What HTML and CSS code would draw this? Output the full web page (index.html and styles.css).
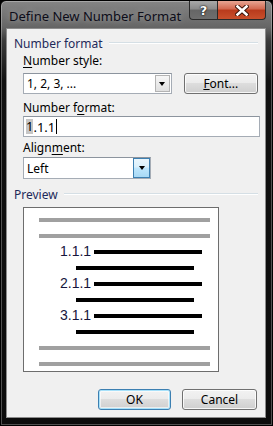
FILE: index.html
```html
<!DOCTYPE html>
<html lang="en">
<head>
    <meta charset="UTF-8">
    <meta name="viewport" content="width=device-width, initial-scale=1.0">
    <title>Define New Number Format</title>
    <link rel="stylesheet" href="styles.css">
</head>
<body>
    <div class="window">
        <div class="titlebar">
            <span class="title">Define New Number Format</span>
            <div class="caption-buttons">
                <div class="cap help">?</div>
                <div class="cap close">
                    <svg width="14" height="11" viewBox="0 0 14 11">
                        <path d="M2.5 1.5 L11.5 9.5 M11.5 1.5 L2.5 9.5" stroke="#3a1208" stroke-width="4.5" stroke-linecap="square"/>
                        <path d="M2.5 1.5 L11.5 9.5 M11.5 1.5 L2.5 9.5" stroke="#fff" stroke-width="2.6" stroke-linecap="square"/>
                    </svg>
                </div>
            </div>
        </div>

        <div class="client">
            <div class="group-head"><span>Number format</span><div class="rule"></div></div>

            <div class="label label-style"><u>N</u>umber style:</div>
            <div class="row">
                <div class="combo combo-style">
                    <span class="combo-text">1, 2, 3, ...</span>
                    <span class="drop"><span class="arrow"></span></span>
                </div>
                <button class="btn btn-font"><u>F</u>ont...</button>
            </div>

            <div class="label label-format">Number f<u>o</u>rmat:</div>
            <div class="textbox"><span class="sel">1</span>.1.1<span class="caret"></span></div>

            <div class="label label-align">Align<u>m</u>ent:</div>
            <div class="combo combo-align">
                <span class="combo-text">Left</span>
                <span class="drop drop-hot"><span class="arrow"></span></span>
            </div>

            <div class="group-head group-preview"><span>Preview</span><div class="rule"></div></div>

            <div class="preview">
                <div class="pv-row pv-gray"><span class="bar"></span></div>
                <div class="pv-row pv-gray"><span class="bar"></span></div>
                <div class="pv-row pv-num"><span class="num">1.1.1</span><span class="bar"></span></div>
                <div class="pv-row pv-indent"><span class="bar"></span></div>
                <div class="pv-row pv-num"><span class="num">2.1.1</span><span class="bar"></span></div>
                <div class="pv-row pv-indent"><span class="bar"></span></div>
                <div class="pv-row pv-num"><span class="num">3.1.1</span><span class="bar"></span></div>
                <div class="pv-row pv-indent"><span class="bar"></span></div>
                <div class="pv-row pv-gray"><span class="bar"></span></div>
                <div class="pv-row pv-gray"><span class="bar"></span></div>
            </div>

            <div class="actions">
                <button class="btn btn-ok">OK</button>
                <button class="btn btn-cancel">Cancel</button>
            </div>
        </div>
    </div>
</body>
</html>
```

FILE: styles.css
```css
html, body {
    margin: 0;
    background: #000;
}
body {
    font-family: "Segoe UI", "Noto Sans", sans-serif;
    font-size: 12px;
    color: #000;
}
.window {
    width: 273px;
    height: 426px;
    box-sizing: border-box;
    border: 1px solid #000;
    border-radius: 6px 6px 0 0;
    background: linear-gradient(to bottom, #858585 0, #666 26px, #3a3a3a 40px, #111 80px, #0c0c0c 100%);
    box-shadow: inset 0 0 0 1px rgba(255, 255, 255, 0.28);
    padding: 0 7px 8px 6px;
    display: flex;
    flex-direction: column;
}
.titlebar {
    height: 28px;
    display: flex;
    justify-content: space-between;
    align-items: flex-start;
}
.title {
    font-size: 13px;
    color: #0c0c18;
    padding: 6px 0 0 2px;
    text-shadow: 0 0 6px rgba(255, 255, 255, 0.4);
}
.caption-buttons {
    display: flex;
    margin-right: -1px;
}
.cap {
    height: 19px;
    box-sizing: border-box;
    border: 1px solid #2a2a2a;
    border-top: none;
    display: flex;
    align-items: center;
    justify-content: center;
}
.help {
    width: 28px;
    border-radius: 0 0 0 4px;
    border-right: none;
    background: linear-gradient(to bottom, #a9a9a9 0, #8a8a8a 45%, #666 50%, #6e6e6e 100%);
    color: #fff;
    font-family: "DejaVu Sans", sans-serif;
    font-weight: bold;
    font-size: 13px;
    text-shadow: 0 0 2px #000, 0 0 1px #000;
}
.close {
    width: 49px;
    border-radius: 0 0 4px 0;
    background: linear-gradient(to bottom, #e7a593 0, #d2674e 45%, #b93a1c 50%, #c9502c 100%);
}
.client {
    flex: 1;
    background: #f0f0f0;
    box-shadow: 0 0 0 1px #8c8c8c;
    padding: 0 7px 0 7px;
    display: flex;
    flex-direction: column;
}
.group-head {
    height: 16px;
    margin-top: 6px;
    display: flex;
    align-items: center;
    color: #1e2a5a;
}
.group-head span {
    margin-right: 6px;
}
.rule {
    flex: 1;
    height: 1px;
    background: #d5dfe5;
    border-bottom: 1px solid #fff;
}
.group-preview {
    margin-top: 7px;
}
.label {
    height: 16px;
    line-height: 16px;
    margin-left: 9px;
}
.label u {
    text-decoration-thickness: 1px;
    text-underline-offset: 2px;
}
.label-style {
    margin-top: 2px;
}
.label-format {
    margin-top: 6px;
}
.label-align {
    margin-top: 3px;
}
.row {
    display: flex;
    align-items: center;
    margin-left: 9px;
    margin-top: 4px;
    gap: 12px;
}
.combo {
    height: 21px;
    box-sizing: border-box;
    border: 1px solid #a5acb5;
    border-top-color: #8c949e;
    background: #fff;
    display: flex;
    align-items: stretch;
}
.combo-style {
    width: 150px;
}
.combo-align {
    width: 128px;
    height: 22px;
    margin-left: 9px;
    margin-top: 1px;
}
.combo-text {
    flex: 1;
    padding-left: 3px;
    display: flex;
    align-items: center;
}
.drop {
    width: 15px;
    box-sizing: border-box;
    border: 1px solid #b3b3b3;
    margin: 1px;
    background: linear-gradient(to bottom, #f6f6f6, #e0e0e0);
    display: flex;
    align-items: center;
    justify-content: center;
}
.drop-hot {
    width: 17px;
    margin: 0;
    border-color: #3c7fb1;
    background: linear-gradient(to bottom, #eaf6fd 0, #d9f0fc 45%, #bee6fd 50%, #a7d9f5 100%);
}
.arrow {
    width: 0;
    height: 0;
    border-left: 3.5px solid transparent;
    border-right: 3.5px solid transparent;
    border-top: 4px solid #000;
}
.btn {
    font-family: inherit;
    font-size: 12px;
    color: #000;
    height: 21px;
    box-sizing: border-box;
    border: 1px solid #707070;
    border-radius: 3px;
    background: linear-gradient(to bottom, #f2f2f2 0, #ebebeb 50%, #dddddd 50%, #cfcfcf 100%);
    box-shadow: inset 0 0 0 1px rgba(255, 255, 255, 0.8);
    padding: 0;
}
.btn-font {
    width: 75px;
}
.textbox {
    height: 21px;
    box-sizing: border-box;
    margin-left: 9px;
    width: 237px;
    border: 1px solid #a5acb5;
    border-top-color: #8c949e;
    background: #fff;
    display: flex;
    align-items: center;
    padding-left: 2px;
    font-size: 13px;
}
.sel {
    background: #c6c6c6;
    line-height: 15px;
}
.caret {
    width: 1px;
    height: 15px;
    background: #000;
    margin-left: 1px;
}
.preview {
    width: 196px;
    height: 165px;
    box-sizing: border-box;
    margin: 5px 0 0 9px;
    border: 1px solid #6d6d6d;
    background: #fff;
    padding: 4px 0 0 0;
}
.pv-row {
    height: 16px;
    display: flex;
    align-items: center;
}
.bar {
    height: 4px;
    background: #000;
}
.pv-gray {
    padding-left: 15px;
}
.pv-gray .bar {
    width: 171px;
    background: #a0a0a0;
}
.pv-num {
    padding-left: 36px;
}
.pv-num .num {
    width: 34px;
    font-family: "Liberation Sans", Arial, sans-serif;
    font-size: 14px;
    color: #16163c;
    line-height: 16px;
    margin-top: -3px;
}
.pv-num .bar {
    width: 108px;
}
.pv-indent {
    padding-left: 52px;
}
.pv-indent .bar {
    width: 118px;
}
.actions {
    display: flex;
    justify-content: flex-end;
    gap: 11px;
    margin-top: 17px;
    margin-right: 1px;
}
.btn-ok {
    width: 73px;
    border-color: #3c7fb1;
    box-shadow: inset 0 0 0 1px #a7e1fa, inset 0 0 0 2px rgba(255, 255, 255, 0.6);
}
.btn-cancel {
    width: 75px;
}
```
